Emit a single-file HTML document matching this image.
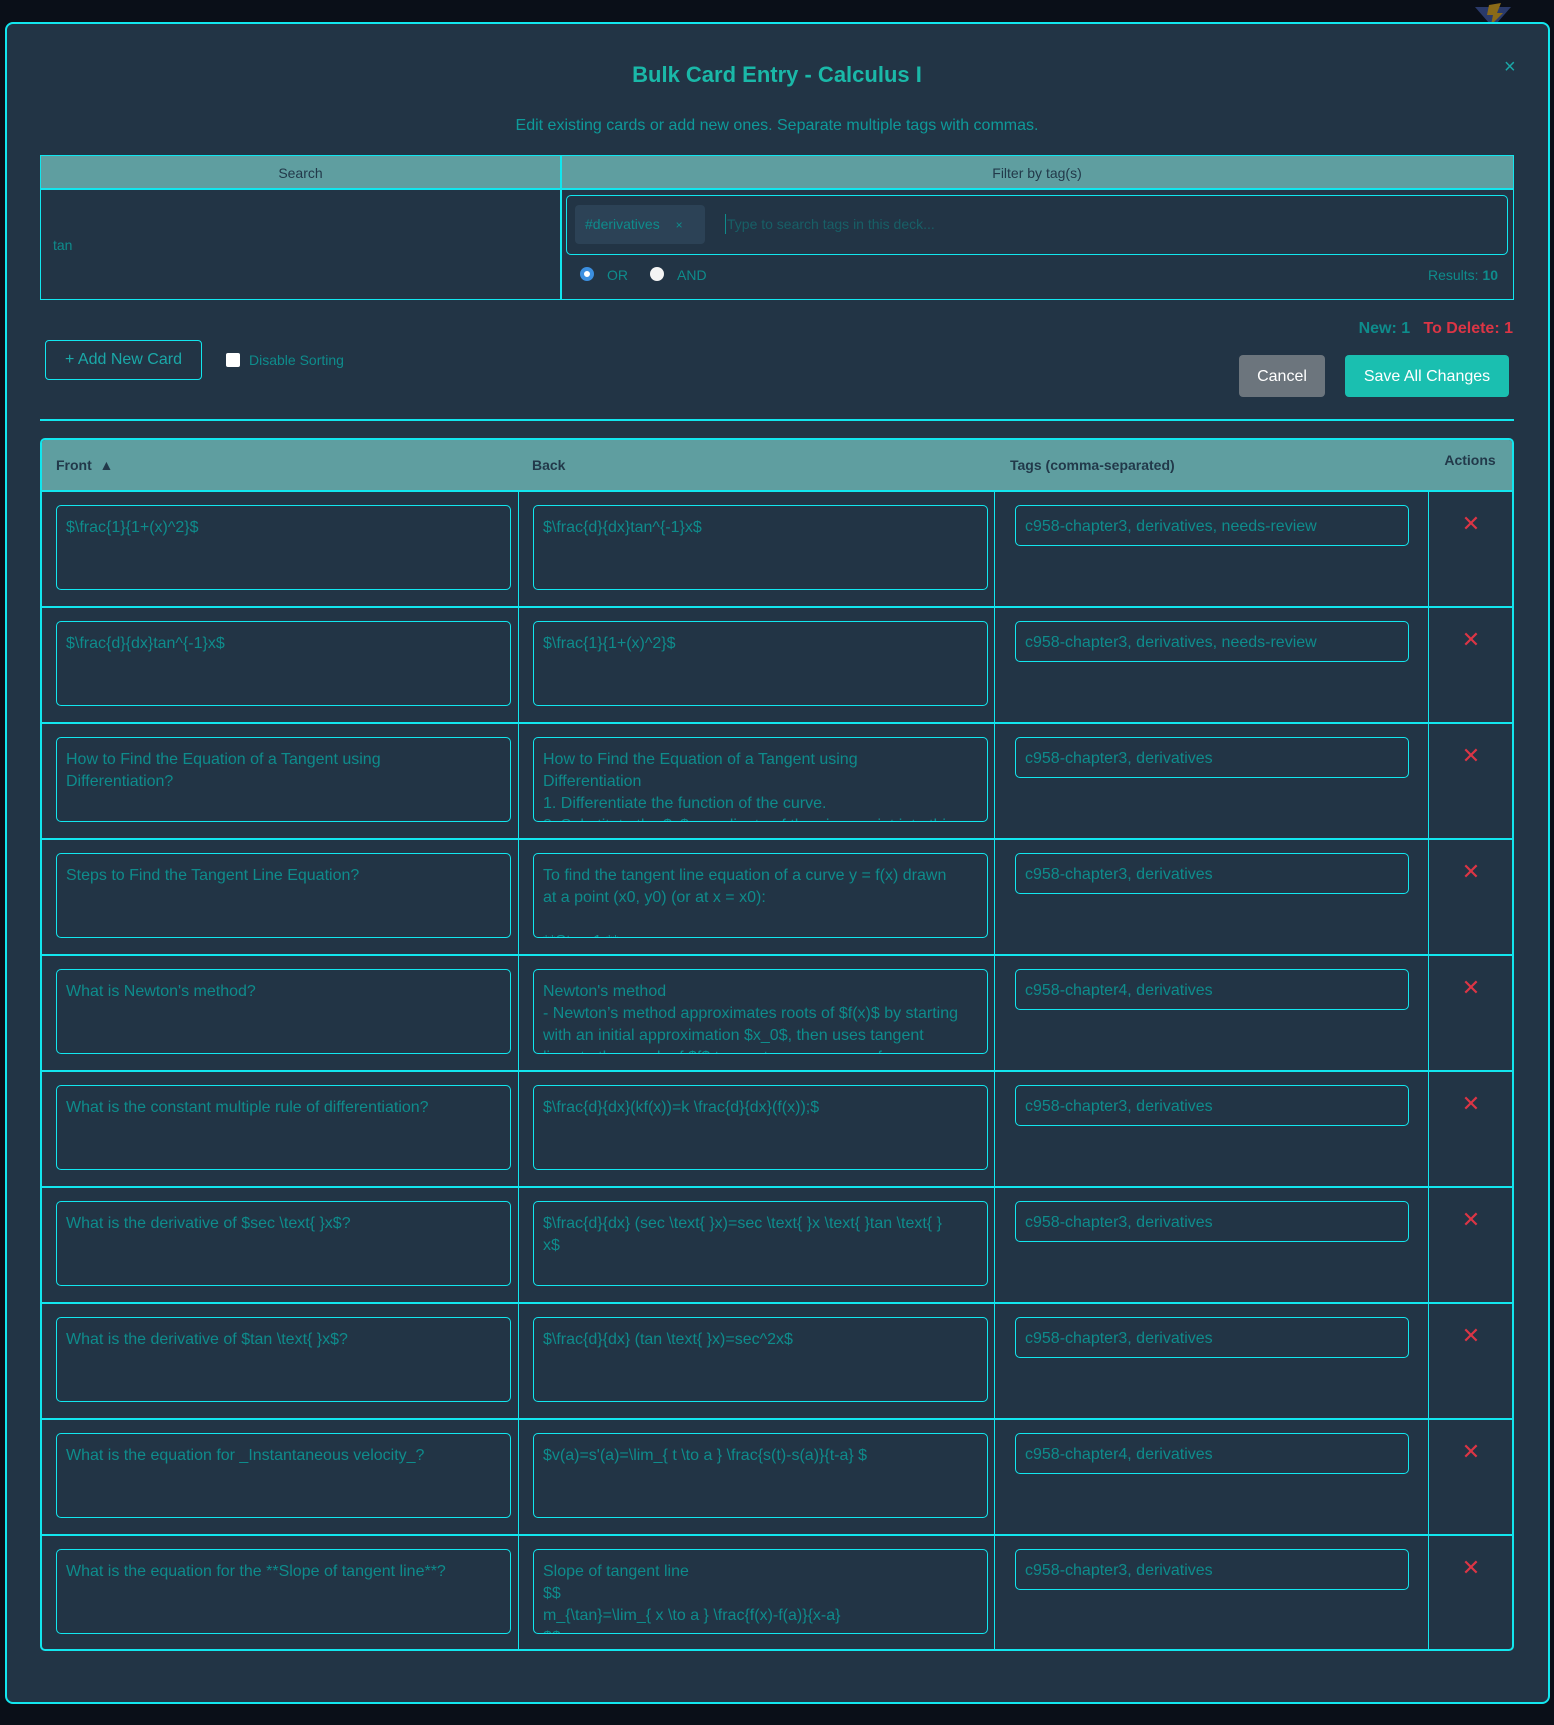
<!DOCTYPE html>
<html><head><meta charset="utf-8">
<style>
*{box-sizing:border-box;margin:0;padding:0}
body{width:1554px;height:1725px;background:#0a0f18;font-family:"Liberation Sans",sans-serif;position:relative;overflow:hidden;color:#0e8c8c}
.a{position:absolute}
.modal{left:5px;top:22px;width:1545px;height:1682px;background:#223445;border:2px solid #12e6ee;border-radius:8px}
.cy{border:1.5px solid #12e6ee}
.hdr{background:#5f9ea0;color:#22394a}
.ta{background:#223445;border:1.5px solid #12e6ee;border-radius:5px;font-size:16px;line-height:22px;padding:11px 9px 9px;overflow:hidden;color:#0e8c8c;white-space:pre-wrap}
.tg{border-radius:5px;border:1.5px solid #12e6ee;font-size:16px;line-height:41px;padding:0 9px;color:#0e8c8c;white-space:nowrap;overflow:hidden}
.x{color:#dc3545;font-size:22px;width:30px;text-align:center}
.hl{background:#12e6ee}
</style></head><body>
<svg class="a" style="left:1475px;top:3px" width="36" height="20" viewBox="0 0 36 20"><polygon points="0,4 36,4 22,20 14,20" fill="#2a3a6a"/><polygon points="14,2 26,0 22,10 28,10 16,22 18,12 12,12" fill="#8a6a18"/></svg>
<div class="a modal"></div>
<div class="a" style="left:0;width:1554px;top:62px;text-align:center;font-size:22px;font-weight:bold;color:#1ab8a8">Bulk Card Entry - Calculus I</div>
<div class="a" style="left:1504px;top:56px;font-size:20px;color:#1aa8a8">×</div>
<div class="a" style="left:0;width:1554px;top:117px;text-align:center;font-size:16px;color:#0e9a9a">Edit existing cards or add new ones. Separate multiple tags with commas.</div>

<div class="a cy" style="left:40px;top:155px;width:1474px;height:145px"></div>
<div class="a hdr" style="left:41px;top:156px;width:1472px;height:32px"></div>
<div class="a hl" style="left:40px;top:188px;width:1474px;height:1.5px"></div>
<div class="a hl" style="left:560px;top:155px;width:1.5px;height:145px"></div>
<div class="a" style="left:41px;top:165px;width:519px;text-align:center;font-size:14px;color:#22394a">Search</div>
<div class="a" style="left:561px;top:165px;width:952px;text-align:center;font-size:14px;color:#22394a">Filter by tag(s)</div>
<div class="a" style="left:53px;top:237px;font-size:14px">tan</div>
<div class="a" style="left:566px;top:195px;width:942px;height:60px;border:1.5px solid #12e6ee;border-radius:5px"></div>
<div class="a" style="left:575px;top:205px;width:130px;height:39px;background:#2c4256;border-radius:4px;font-size:14px;line-height:39px;padding-left:10px">#derivatives <span style="margin-left:12px;font-size:12px">×</span></div>
<div class="a" style="left:725px;top:214px;width:1px;height:20px;background:#0e8c8c"></div>
<div class="a" style="left:727px;top:216px;font-size:14px;color:#175f66">Type to search tags in this deck...</div>
<div class="a" style="left:580px;top:267px;width:14px;height:14px;border-radius:50%;background:#fff;border:4px solid #3b8fe0"></div>
<div class="a" style="left:607px;top:267px;font-size:14px">OR</div>
<div class="a" style="left:650px;top:267px;width:14px;height:14px;border-radius:50%;background:#f4f4f4"></div>
<div class="a" style="left:677px;top:267px;font-size:14px">AND</div>
<div class="a" style="left:1300px;top:267px;width:198px;text-align:right;font-size:14px">Results: <b>10</b></div>

<div class="a" style="left:1300px;top:320px;width:213px;text-align:right;font-size:16px;font-weight:bold"><span style="color:#0e8c8c">New: 1</span>&nbsp;&nbsp;&nbsp;<span style="color:#dc3545">To Delete: 1</span></div>
<div class="a" style="left:45px;top:340px;width:157px;height:40px;border:1.5px solid #12e6ee;border-radius:4px;text-align:center;line-height:38px;font-size:16px;color:#1aa8a8">+ Add New Card</div>
<div class="a" style="left:226px;top:353px;width:14px;height:14px;background:#fff;border-radius:2px"></div>
<div class="a" style="left:249px;top:352px;font-size:14px">Disable Sorting</div>
<div class="a" style="left:1239px;top:355px;width:86px;height:42px;background:#6c757d;border-radius:4px;color:#fff;text-align:center;line-height:43px;font-size:16px">Cancel</div>
<div class="a" style="left:1345px;top:355px;width:164px;height:42px;background:#1abfb0;border-radius:4px;color:#fff;text-align:center;line-height:43px;font-size:16px">Save All Changes</div>
<div class="a hl" style="left:40px;top:419px;width:1474px;height:1.5px"></div>

<div class="a" style="left:40px;top:438px;width:1474px;height:1213px;border:2px solid #12e6ee;border-radius:5px"></div>
<div class="a hdr" style="left:42px;top:440px;width:1470px;height:50px;border-radius:3px 3px 0 0"></div>
<div class="a hl" style="left:40px;top:490px;width:1474px;height:1.5px"></div>
<div class="a" style="left:56px;top:457px;font-size:14px;font-weight:bold;color:#22394a">Front &nbsp;▲</div>
<div class="a" style="left:532px;top:457px;font-size:14px;font-weight:bold;color:#22394a">Back</div>
<div class="a" style="left:1010px;top:457px;font-size:14px;font-weight:bold;color:#22394a">Tags (comma-separated)</div>
<div class="a" style="left:1428px;top:452px;width:84px;text-align:center;font-size:14px;font-weight:bold;color:#22394a">Actions</div>
<div class="a hl" style="left:518px;top:490px;width:1px;height:1160px"></div>
<div class="a hl" style="left:994px;top:490px;width:1px;height:1160px"></div>
<div class="a hl" style="left:1428px;top:490px;width:1px;height:1160px"></div>

<div id="rows"></div>
<script>
const R=[
["$\\frac{1}{1+(x)^2}$","$\\frac{d}{dx}tan^{-1}x$","c958-chapter3, derivatives, needs-review"],
["$\\frac{d}{dx}tan^{-1}x$","$\\frac{1}{1+(x)^2}$","c958-chapter3, derivatives, needs-review"],
["How to Find the Equation of a Tangent using\nDifferentiation?","How to Find the Equation of a Tangent using\nDifferentiation\n1. Differentiate the function of the curve.\n2. Substitute the $x$ coordinate of the given point into this","c958-chapter3, derivatives"],
["Steps to Find the Tangent Line Equation?","To find the tangent line equation of a curve y = f(x) drawn\nat a point (x0, y0) (or at x = x0):\n\n**Step 1:**","c958-chapter3, derivatives"],
["What is Newton's method?","Newton's method\n- Newton’s method approximates roots of $f(x)$ by starting\nwith an initial approximation $x_0$, then uses tangent\nlines to the graph of $f$ to create a sequence of","c958-chapter4, derivatives"],
["What is the constant multiple rule of differentiation?","$\\frac{d}{dx}(kf(x))=k \\frac{d}{dx}(f(x));$","c958-chapter3, derivatives"],
["What is the derivative of $sec \\text{ }x$?","$\\frac{d}{dx} (sec \\text{ }x)=sec \\text{ }x \\text{ }tan \\text{ }\nx$","c958-chapter3, derivatives"],
["What is the derivative of $tan \\text{ }x$?","$\\frac{d}{dx} (tan \\text{ }x)=sec^2x$","c958-chapter3, derivatives"],
["What is the equation for _Instantaneous velocity_?","$v(a)=s'(a)=\\lim_{ t \\to a } \\frac{s(t)-s(a)}{t-a} $","c958-chapter4, derivatives"],
["What is the equation for the **Slope of tangent line**?","Slope of tangent line\n$$\nm_{\\tan}=\\lim_{ x \\to a } \\frac{f(x)-f(a)}{x-a}\n$$","c958-chapter3, derivatives"]];
const esc=s=>s.replace(/&/g,'&amp;').replace(/</g,'&lt;');
let h='';
R.forEach((r,i)=>{const t=490+i*116;
h+=`<div class="a ta" style="left:56px;top:${t+15}px;width:455px;height:85px">${esc(r[0])}</div>`;
h+=`<div class="a ta" style="left:533px;top:${t+15}px;width:455px;height:85px">${esc(r[1])}</div>`;
h+=`<div class="a tg" style="left:1015px;top:${t+15}px;width:394px;height:41px">${esc(r[2])}</div>`;
h+=`<div class="a x" style="left:1456px;top:${t+21}px">✕</div>`;
if(i<9)h+=`<div class="a hl" style="left:40px;top:${t+116}px;width:1474px;height:1.5px"></div>`;});
document.getElementById('rows').innerHTML=h;
</script>
</body></html>
